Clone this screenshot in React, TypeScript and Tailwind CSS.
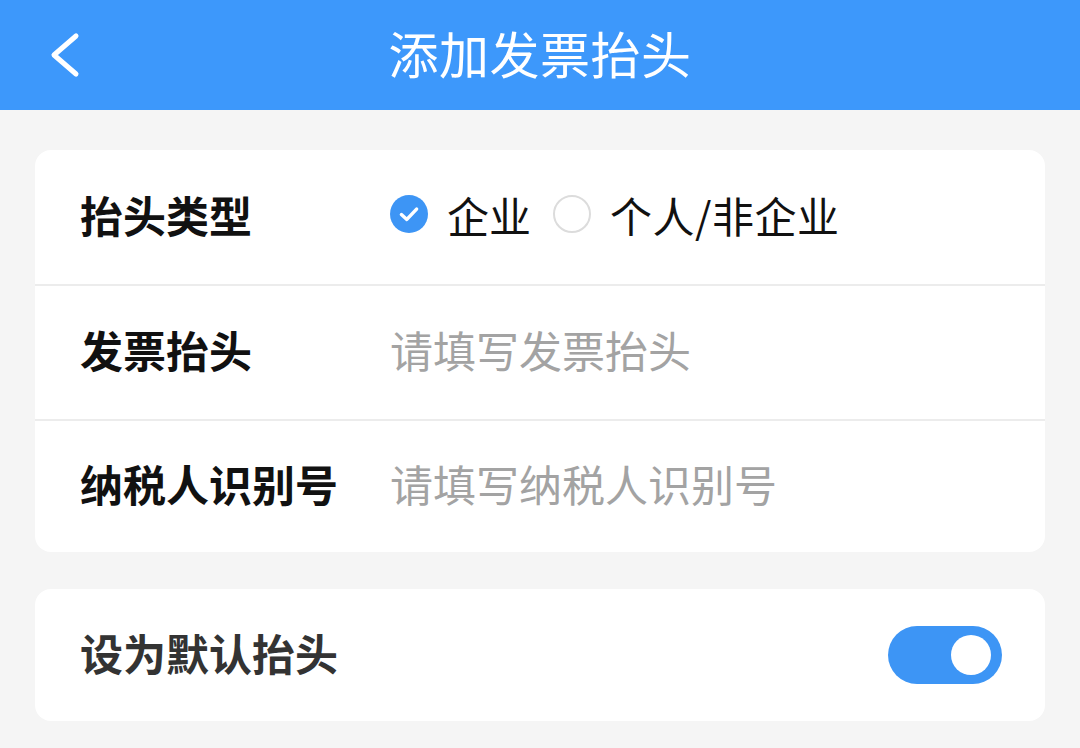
import { useState } from "react";

const font = { fontFamily: "'Noto Sans CJK SC', 'Noto Sans', sans-serif" };

function Radio({ checked }: { checked: boolean }) {
    if (checked) {
        return (
            <span className="w-[38px] h-[38px] rounded-full bg-[#3d95f5] flex items-center justify-center shrink-0">
                <svg width="26" height="26" viewBox="0 0 24 24" fill="none" stroke="#fff" strokeWidth="3.2" strokeLinecap="round" strokeLinejoin="round">
                    <polyline points="5,12.5 10,17 19,7.5" />
                </svg>
            </span>
        );
    }
    return <span className="w-[38px] h-[38px] rounded-full border-2 border-[#dcdcdc] bg-white shrink-0" />;
}

export default function App() {
    const [type, setType]       = useState<"company" | "personal">("company");
    const [isDefault, setDefault] = useState(true);

    return (
        <div className="w-[1080px] h-[748px] bg-[#f5f5f5] overflow-hidden" style={font}>
            {/* Header */}
            <div className="h-[110px] bg-[#3d98fb] relative flex items-center justify-center pb-[6px]">
                <button className="absolute left-[44px] top-[30px] w-[40px] h-[50px] flex items-center justify-center">
                    <svg width="34" height="48" viewBox="0 0 34 48" fill="none" stroke="#fff" strokeWidth="5" strokeLinecap="round" strokeLinejoin="round">
                        <polyline points="29,5 7,24 29,43" />
                    </svg>
                </button>
                <h1 className="text-white text-[50px] leading-none font-normal tracking-[0.5px]">添加发票抬头</h1>
            </div>

            {/* Form card */}
            <div className="mx-[35px] mt-[40px] bg-white rounded-[16px] overflow-hidden">
                <div className="h-[134px] flex items-center pl-[45px] pb-[6px]">
                    <span className="w-[310px] text-[43px] font-bold text-[#111]">抬头类型</span>
                    <div className="flex items-center">
                        <button onClick={() => setType("company")} className="flex items-center gap-[19px]">
                            <Radio checked={type === "company"} />
                            <span className="text-[42px] text-[#111]">企业</span>
                        </button>
                        <button onClick={() => setType("personal")} className="flex items-center gap-[19px] ml-[22px]">
                            <Radio checked={type === "personal"} />
                            <span className="text-[42px] text-[#111] tracking-[0.5px]">个人/非企业</span>
                        </button>
                    </div>
                </div>
                <div className="h-[135px] flex items-center pl-[45px] pb-[6px] border-t-2 border-[#ececec]">
                    <span className="w-[310px] text-[43px] font-bold text-[#111]">发票抬头</span>
                    <span className="text-[43px] text-[#a3a3a3]">请填写发票抬头</span>
                </div>
                <div className="h-[133px] flex items-center pl-[45px] pb-[6px] border-t-2 border-[#ececec]">
                    <span className="w-[310px] text-[43px] font-bold text-[#111] whitespace-nowrap">纳税人识别号</span>
                    <span className="text-[43px] text-[#a3a3a3]">请填写纳税人识别号</span>
                </div>
            </div>

            {/* Default toggle card */}
            <div className="mx-[35px] mt-[37px] h-[132px] bg-white rounded-[16px] flex items-center justify-between pl-[45px] pr-[43px]">
                <span className="text-[43px] font-bold text-[#333] pb-[6px]">设为默认抬头</span>
                <button
                    onClick={() => setDefault(!isDefault)}
                    className={`w-[114px] h-[58px] rounded-full flex items-center px-[11px] ${isDefault ? "bg-[#3d95f5] justify-end" : "bg-[#dcdcdc] justify-start"}`}
                >
                    <span className="w-[40px] h-[40px] rounded-full bg-white" />
                </button>
            </div>
        </div>
    );
}
